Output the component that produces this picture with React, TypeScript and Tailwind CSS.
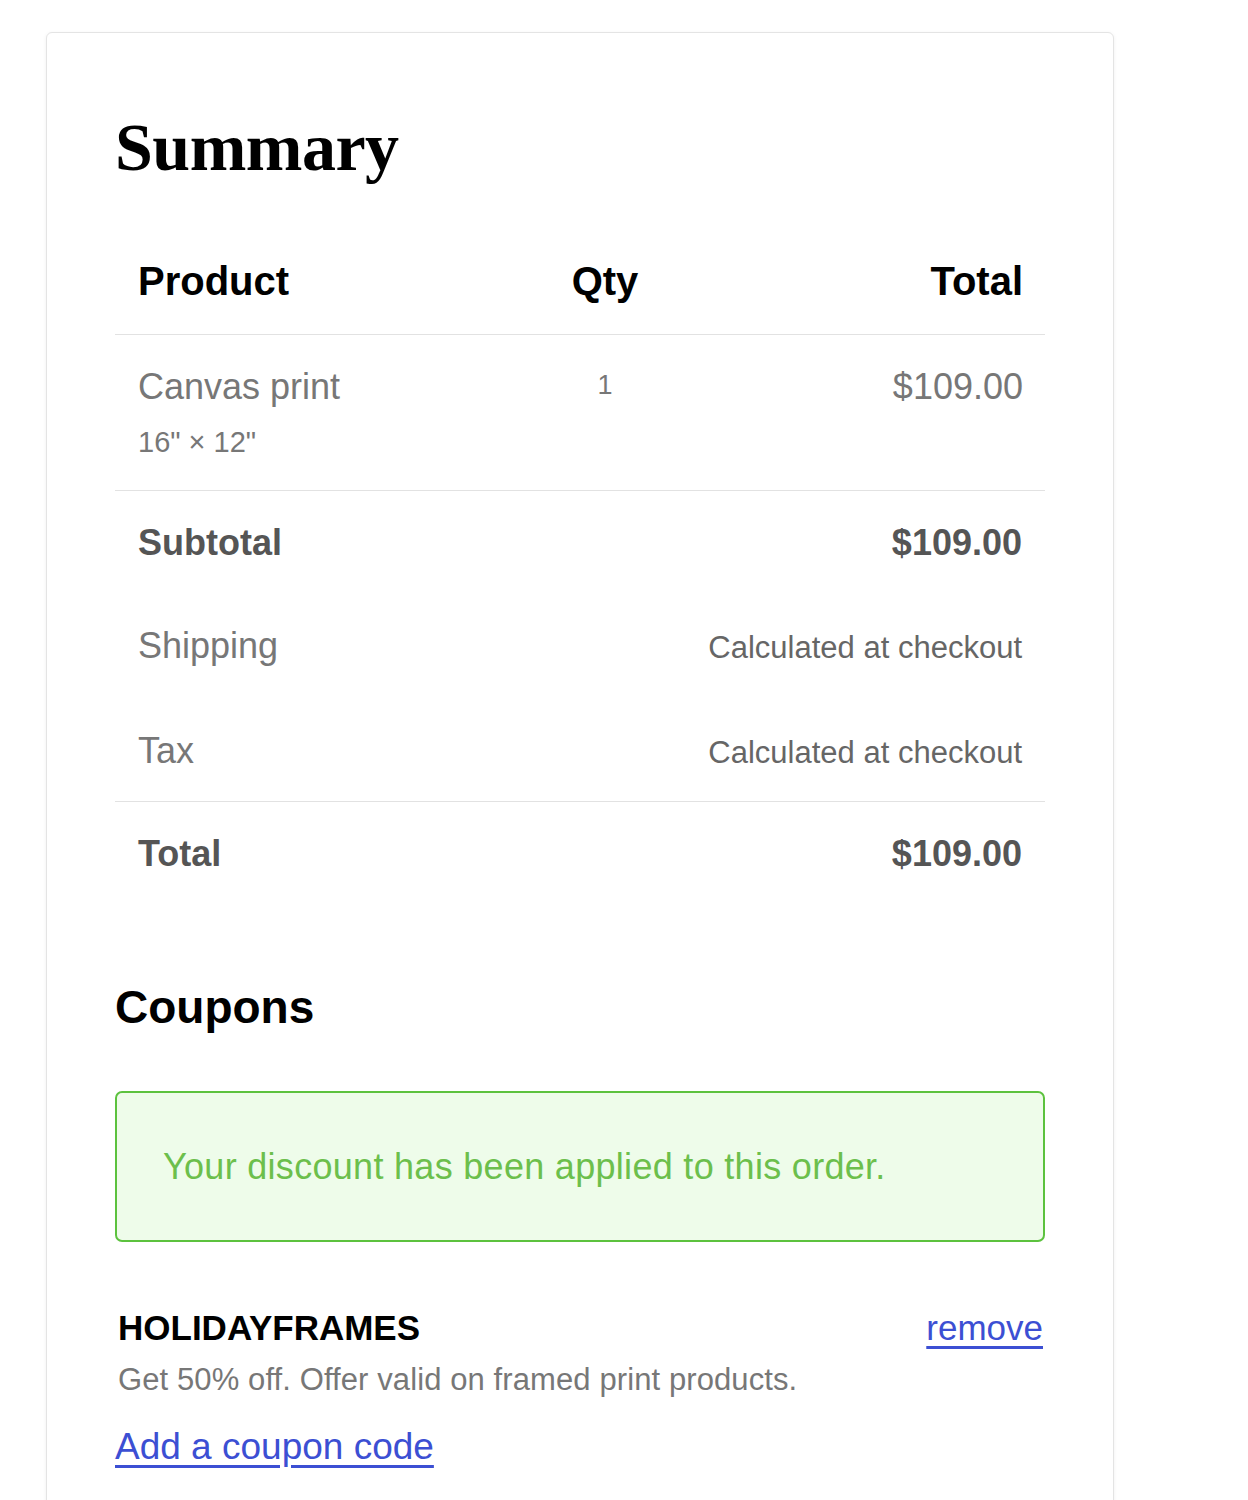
import React from 'react';

const sans = { fontFamily: '"Liberation Sans", Arial, sans-serif' };

const SummaryRow: React.FC<{ label: string; value: string; bold?: boolean; note?: boolean }> = ({ label, value, bold, note }) => (
  <div className="flex items-baseline justify-between px-[23px]">
    <span className={`text-[36px] leading-[44px] ${bold ? 'font-bold text-[#555]' : 'text-[#777]'}`}>{label}</span>
    {note ? (
      <span className="text-[31px] leading-[44px] text-[#666]">{value}</span>
    ) : (
      <span className={`text-[36px] leading-[44px] ${bold ? 'font-bold text-[#555]' : 'text-[#777]'}`}>{value}</span>
    )}
  </div>
);

const App: React.FC = () => {
  return (
    <div className="min-h-[1500px] bg-white overflow-hidden" style={sans}>
      <div className="ml-[46px] mt-[32px] w-[1068px] min-h-[1520px] bg-white border border-[#e4e4e4] rounded-[6px] shadow-[0_1px_4px_rgba(0,0,0,0.06)] px-[68px] pt-[80px]">
        {/* Summary heading */}
        <h1
          className="text-[68px] leading-[68px] font-bold text-black tracking-[-0.5px]"
          style={{ fontFamily: '"Liberation Serif", "Times New Roman", serif' }}
        >
          Summary
        </h1>

        {/* Table header */}
        <div className="mt-[76px] grid grid-cols-[425px_130px_1fr] pb-[29px] border-b border-[#e2e2e2]">
          <span className="pl-[23px] text-[40px] leading-[48px] font-bold text-black">Product</span>
          <span className="text-center text-[40px] leading-[48px] font-bold text-black">Qty</span>
          <span className="pr-[22px] text-right text-[40px] leading-[48px] font-bold text-black">Total</span>
        </div>

        {/* Product row */}
        <div className="grid grid-cols-[425px_130px_1fr] pt-[30px] pb-[31px] border-b border-[#e2e2e2]">
          <div className="pl-[23px]">
            <div className="text-[36px] leading-[44px] text-[#777]">Canvas print</div>
            <div className="mt-[16px] text-[29px] leading-[34px] text-[#777]">16" × 12"</div>
          </div>
          <div className="text-center text-[27px] leading-[40px] text-[#777]">1</div>
          <div className="pr-[22px] text-right text-[36px] leading-[44px] text-[#777]">$109.00</div>
        </div>

        {/* Totals */}
        <div className="flex flex-col gap-[59px] pt-[30px] pb-[26px] border-b border-[#e2e2e2]">
          <SummaryRow label="Subtotal" value="$109.00" bold />
          <SummaryRow label="Shipping" value="Calculated at checkout" note />
          <SummaryRow label="Tax" value="Calculated at checkout" note />
        </div>
        <div className="pt-[30px]">
          <SummaryRow label="Total" value="$109.00" bold />
        </div>

        {/* Coupons */}
        <h2 className="mt-[105px] text-[46px] leading-[52px] font-bold text-black">Coupons</h2>

        <div className="mt-[58px] h-[151px] flex items-center rounded-[7px] border-2 border-[#5cc23e] bg-[#eefcea] px-[46px]">
          <p className="text-[36px] leading-[44px] tracking-[0.3px] text-[#6cbf4c]">Your discount has been applied to this order.</p>
        </div>

        <div className="mt-[66px] flex items-baseline justify-between pl-[3px]">
          <span className="text-[35px] leading-[40px] font-bold text-black">HOLIDAYFRAMES</span>
          <a href="#" className="text-[35px] leading-[40px] text-[#3c4fd3] underline underline-offset-[6px] mr-[2px]">remove</a>
        </div>
        <p className="mt-[14px] pl-[3px] text-[31px] leading-[36px] tracking-[0.1px] text-[#777]">
          Get 50% off. Offer valid on framed print products.
        </p>
        <a href="#" className="mt-[28px] inline-block text-[37px] leading-[42px] text-[#3c4fd3] underline underline-offset-[6px]">
          Add a coupon code
        </a>
      </div>
    </div>
  );
};

export default App;
